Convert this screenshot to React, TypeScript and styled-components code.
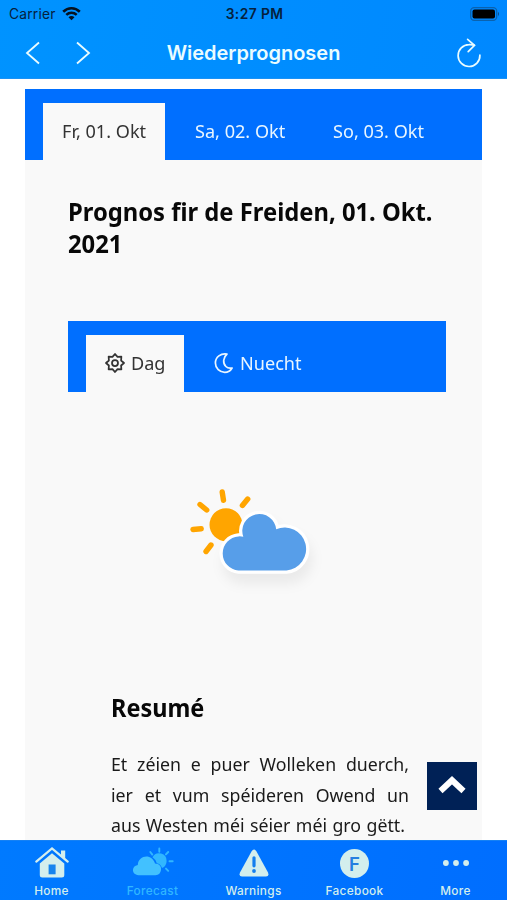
import React from "react";
import styled, { createGlobalStyle } from "styled-components";

const Global = createGlobalStyle`
  * { box-sizing: border-box; }
  body { margin: 0; background: #fff; overflow: hidden; }
  h1, h2, p { margin: 0; }
  button { border: 0; padding: 0; background: none; font: inherit; color: inherit; }
  svg { display: block; flex: none; }
`;

const Screen = styled.div`
  width: 507px;
  height: 900px;
  display: flex;
  flex-direction: column;
  overflow: hidden;
  position: relative;
  background: #fff;
  font-family: "Noto Sans", sans-serif;
`;

const Header = styled.header`
  height: 79px;
  flex: none;
  background: linear-gradient(100deg, #0093ff, #0088ff);
  border-bottom: 1px solid #1b92f5;
  font-family: Inter, sans-serif;
`;

const StatusBar = styled.div`
  height: 27px;
  display: grid;
  grid-template-columns: 1fr auto 1fr;
  align-items: center;
  padding: 0 7px 0 9px;
  color: #06213c;
  font-size: 13.8px;
`;

const Carrier = styled.span`
  display: flex;
  align-items: center;
  gap: 6px;
  letter-spacing: 0.2px;
`;

const Clock = styled.span`
  font-weight: 600;
  font-size: 13.8px;
  letter-spacing: 0.4px;
`;

const BatteryBox = styled.span`
  justify-self: end;
`;

const NavBar = styled.div`
  height: 51px;
  display: grid;
  grid-template-columns: 120px 1fr 120px;
  align-items: center;
  color: #eafcff;
`;

const NavArrows = styled.div`
  display: flex;
  gap: 34px;
  padding-left: 25px;
`;

const Title = styled.h1`
  text-align: center;
  font-size: 20px;
  font-weight: 600;
  line-height: 26px;
  letter-spacing: -0.02px;
  white-space: nowrap;
`;

const Reload = styled.button`
  justify-self: end;
  margin-right: 25px;
`;

const Page = styled.main`
  flex: 1;
  min-height: 0;
  overflow: hidden;
  padding: 10px 25px 0 25px;
`;

const Panel = styled.section`
  height: 100%;
  background: #f9f9f9;
`;

const TabStrip = styled.nav`
  height: 71px;
  display: flex;
  align-items: flex-end;
  padding-left: 18px;
  background: #006fff;
`;

const Tab = styled.button<{ $active?: boolean; $width: number }>`
  width: ${(p) => p.$width}px;
  height: 57px;
  flex: none;
  display: flex;
  align-items: center;
  gap: 6px;
  padding: 0 0 2px ${(p) => (p.$active ? 19 : 30)}px;
  background: ${(p) => (p.$active ? "#f9f9f9" : "transparent")};
  color: ${(p) => (p.$active ? "#333" : "#e9f6ff")};
  font-size: 18.7px;
  white-space: nowrap;
`;

const Label = styled.span`
  display: block;
  transform: scaleX(0.968);
  transform-origin: left center;
`;

const Forecast = styled.div`
  padding: 36px 36px 0 43px;
`;

const DayHeading = styled.h2`
  width: 380px;
  font-size: 24.2px;
  line-height: 32px;
  font-weight: 700;
  color: #080808;
  margin-bottom: 61px;
  white-space: nowrap;
  transform: scaleX(0.983);
  transform-origin: left center;
`;

const Picture = styled.div`
  height: 299px;
  padding: 84px 0 0 110px;
`;

const Summary = styled.article`
  padding-left: 43px;
`;

const SummaryHeading = styled.h2`
  font-size: 24.2px;
  line-height: 34px;
  color: #080808;
  margin-bottom: 24px;
  transform: scaleX(0.97);
  transform-origin: left center;
`;

const Line = styled.span<{ $width: number }>`
  display: block;
  width: ${(p) => p.$width / 0.945}px;
  transform: scaleX(0.945);
  transform-origin: left center;
  text-align-last: justify;
  white-space: nowrap;
`;

const Body = styled.p`
  font-size: 18.8px;
  line-height: 30.7px;
  color: #1a1a1a;
`;

const ToTop = styled.button`
  position: absolute;
  left: 427px;
  top: 762px;
  width: 50px;
  height: 48px;
  display: flex;
  align-items: center;
  justify-content: center;
  background: #002156;
`;

const BottomBar = styled.nav`
  height: 60px;
  flex: none;
  display: grid;
  grid-template-columns: repeat(5, 101px);
  padding-left: 1px;
  background: linear-gradient(100deg, #007aff, #006eff);
  border-top: 1px solid #1581f4;
  font-family: Inter, sans-serif;
`;

const BottomItem = styled.button<{ $active?: boolean }>`
  display: flex;
  flex-direction: column;
  align-items: center;
  padding-top: 5px;
  color: ${(p) => (p.$active ? "#31b7ff" : "#d3eeed")};
  font-size: 11.8px;
  font-weight: 500;
  line-height: 14px;
  letter-spacing: 0.35px;
  gap: 4px;
`;

const Disc = styled.span`
  width: 29px;
  height: 29px;
  margin: 3px 0 2px;
  border-radius: 50%;
  background: #d3eeed;
  color: #257fe0;
  display: flex;
  align-items: center;
  justify-content: center;
  font-size: 18.5px;
  font-weight: 600;
  letter-spacing: 0;
`;

const Wifi = () => (
  <svg width="19" height="15" viewBox="0 0 19 15" fill="none" stroke="#06121f" strokeWidth="2.6">
    <path d="M1.2 5.7C6 1.1 13 1.1 17.8 5.7" />
    <path d="M4.3 8.9c3-2.8 7.4-2.8 10.4 0" />
    <path d="M9.5 14.3 6.5 11.2c1.8-1.5 4.2-1.5 6 0z" fill="#06121f" stroke="none" />
  </svg>
);

const Battery = () => (
  <svg width="30" height="14" viewBox="0 0 30 14">
    <rect x="0.7" y="0.7" width="26" height="12.6" rx="3.5" fill="none" stroke="#0a62ae" strokeWidth="1.3" />
    <rect x="2.5" y="2.5" width="22.5" height="9" rx="2" fill="#000" />
    <path d="M28 4.8q2 2.2 0 4.4z" fill="#0a4a88" />
  </svg>
);

const Chevron = ({ d }: { d: string }) => (
  <svg width="16" height="24" viewBox="0 0 16 24" fill="none" stroke="currentColor" strokeWidth="1.8">
    <path d={d} />
  </svg>
);

const ReloadIcon = () => (
  <svg width="26" height="30" viewBox="0 0 26 30" fill="none" stroke="currentColor" strokeWidth="1.7" strokeLinecap="round">
    <path d="M18.3 7.3Q16 6.5 13 6.7A10.9 10.9 0 1 0 23.9 17.2" />
    <path d="M11.6 1.3 18.5 7.3 12.2 13.6" />
  </svg>
);

const gear = Array.from({ length: 16 }, (_, i) => {
  const a = (i * Math.PI) / 8 - Math.PI / 2;
  const r = i % 2 ? 6.6 : 9;
  return `${(10 + r * Math.cos(a)).toFixed(2)},${(10 + r * Math.sin(a)).toFixed(2)}`;
}).join(" ");

const DayIcon = () => (
  <svg width="20" height="20" viewBox="0 0 20 20" fill="none" stroke="currentColor" strokeWidth="1.75" strokeLinejoin="round">
    <polygon points={gear} />
    <circle cx="10" cy="10" r="3" />
  </svg>
);

const MoonIcon = () => (
  <svg width="20" height="22" viewBox="0 0 20 22" fill="none" stroke="currentColor" strokeWidth="1.7" strokeLinejoin="round">
    <path d="M13 2C6.800.9 1.400 5.200 1.400 11c0 5.400 4.300 9.300 9.300 9.300 3.100 0 5.800-1.500 7.400-4.300-2 .4-4.600.2-6.200-1.500-3.400-3.400-2.800-9 1.100-12.500Z" />
  </svg>
);

const Cloud = styled.path`
  filter: drop-shadow(3px 10px 6px rgba(0, 0, 0, 0.06));
`;

const WeatherIcon = () => (
  <svg width="130" height="120" viewBox="178 476 130 120" overflow="visible">
    <g stroke="#ffa500" strokeWidth="5.4" strokeLinecap="round">
      <path d="M222.2 492 223.5 500.3M247.7 499 242.4 505.5M200 504.5 206.7 510M193 529.5 201.2 528.7M211 545 206 551.5" />
    </g>
    <circle cx="226" cy="524.7" r="16.5" fill="#ffa500" />
    <Cloud
      d="M239 570.5A17.1 17.1 0 0 1 239 536.4Q241.500 536.200 243.800 536.800A17 17 0 1 1 276.700 529.300A21.500 21.500 0 1 1 287 570.500Z"
      fill="#579ee9"
      stroke="#fff"
      strokeWidth="6.4"
      strokeLinejoin="round"
      paintOrder="stroke"
      transform="translate(-0.500 0)"
    />
  </svg>
);

const HomeIcon = () => (
  <svg width="36" height="34" viewBox="0 0 36 34">
    <path d="M18 7.2 5.8 17.5V29q0 2.5 2.5 2.5h19.5q2.5 0 2.5-2.5V17.5z" fill="#d3eeed" />
    <path d="M2.3 16.2 18 3l15.7 13.2" fill="none" stroke="#0077ff" strokeWidth="4.6" />
    <path d="M27 4.5h4.2V14L27 10.5z" fill="#d3eeed" />
    <path d="M2.3 15.6 18 2.4l15.7 13.2" fill="none" stroke="#d3eeed" strokeWidth="2.3" strokeLinecap="round" />
    <rect x="14.6" y="18.5" width="7" height="9.8" fill="#1684ee" />
  </svg>
);

const ForecastIcon = () => (
  <svg width="42" height="34" viewBox="0 0 42 34">
    <g stroke="#31b7ff" strokeWidth="1.9" strokeLinecap="round">
      <path d="M27.3 2.5v3.2M18.3 6l2 2.6M36.2 6l-2.3 2.4M37.5 15.3h3.2M34 22.6l2.2 2.2" />
    </g>
    <path d="M20.5 11.2a7.5 7.5 0 0 1 14.100 3.800q0 5.200-4.600 7-1.300-4-5.200-4.700-1-4-4.300-6.100z" fill="#31b7ff" />
    <path d="M6.5 29.2c-7.4-.5-7.2-9.5-.7-10.3C6.2 9 20 7 23 17.500c4.500.2 6.300 2.800 6 6-.2 3.500-2.300 5.700-5.500 5.700z" fill="#42c1ff" />
  </svg>
);

const WarningIcon = () => (
  <svg width="34" height="34" viewBox="0 0 34 34">
    <path d="M14.5 5.5Q17 1.5 19.5 5.5L31 26.5Q32.5 30.6 29 30.6H5Q1.5 30.6 3 26.5z" fill="#d3eeed" />
    <path d="M17 11.8v8" stroke="#147fee" strokeWidth="3.2" strokeLinecap="round" />
    <circle cx="17" cy="25" r="1.9" fill="#147fee" />
  </svg>
);

const MoreIcon = () => (
  <svg width="28" height="34" viewBox="0 0 28 34" fill="#d3eeed">
    <circle cx="3.9" cy="17" r="2.9" />
    <circle cx="14" cy="17" r="2.9" />
    <circle cx="24.1" cy="17" r="2.9" />
  </svg>
);

export default function App() {
  return (
    <>
      <Global />
      <Screen>
        <Header>
          <StatusBar>
            <Carrier>Carrier <Wifi /></Carrier>
            <Clock>3:27 PM</Clock>
            <BatteryBox><Battery /></BatteryBox>
          </StatusBar>
          <NavBar>
            <NavArrows>
              <Chevron d="M14 1.5 2 12l12 10.5" />
              <Chevron d="M2 1.5 14 12 2 22.5" />
            </NavArrows>
            <Title>Wiederprognosen</Title>
            <Reload aria-label="Reload"><ReloadIcon /></Reload>
          </NavBar>
        </Header>
        <Page>
          <Panel>
            <TabStrip>
              <Tab $active $width={122}><Label>Fr, 01. Okt</Label></Tab>
              <Tab $width={138}><Label>Sa, 02. Okt</Label></Tab>
              <Tab $width={138}><Label>So, 03. Okt</Label></Tab>
            </TabStrip>
            <Forecast>
              <DayHeading>Prognos fir de Freiden, 01. Okt.<br />2021</DayHeading>
              <TabStrip>
                <Tab $active $width={98}><DayIcon /><Label>Dag</Label></Tab>
                <Tab $width={138}><MoonIcon /><Label>Nuecht</Label></Tab>
              </TabStrip>
              <Picture><WeatherIcon /></Picture>
              <Summary>
                <SummaryHeading>Resumé</SummaryHeading>
                <Body>
                  <Line $width={298}>Et zéien e puer Wolleken duerch,</Line>
                  <Line $width={298}>ier et vum spéideren Owend un</Line>
                  <Line $width={294}>aus Westen méi séier méi gro gëtt.</Line>
                </Body>
              </Summary>
            </Forecast>
          </Panel>
        </Page>
        <BottomBar>
          <BottomItem><HomeIcon />Home</BottomItem>
          <BottomItem $active><ForecastIcon />Forecast</BottomItem>
          <BottomItem><WarningIcon />Warnings</BottomItem>
          <BottomItem><Disc>F</Disc>Facebook</BottomItem>
          <BottomItem><MoreIcon />More</BottomItem>
        </BottomBar>
        <ToTop aria-label="Back to top">
          <svg width="28" height="20" viewBox="0 0 28 20" fill="none" stroke="#fff" strokeWidth="6">
            <path d="M2.5 15 14 4.2 25.5 15" />
          </svg>
        </ToTop>
      </Screen>
    </>
  );
}
